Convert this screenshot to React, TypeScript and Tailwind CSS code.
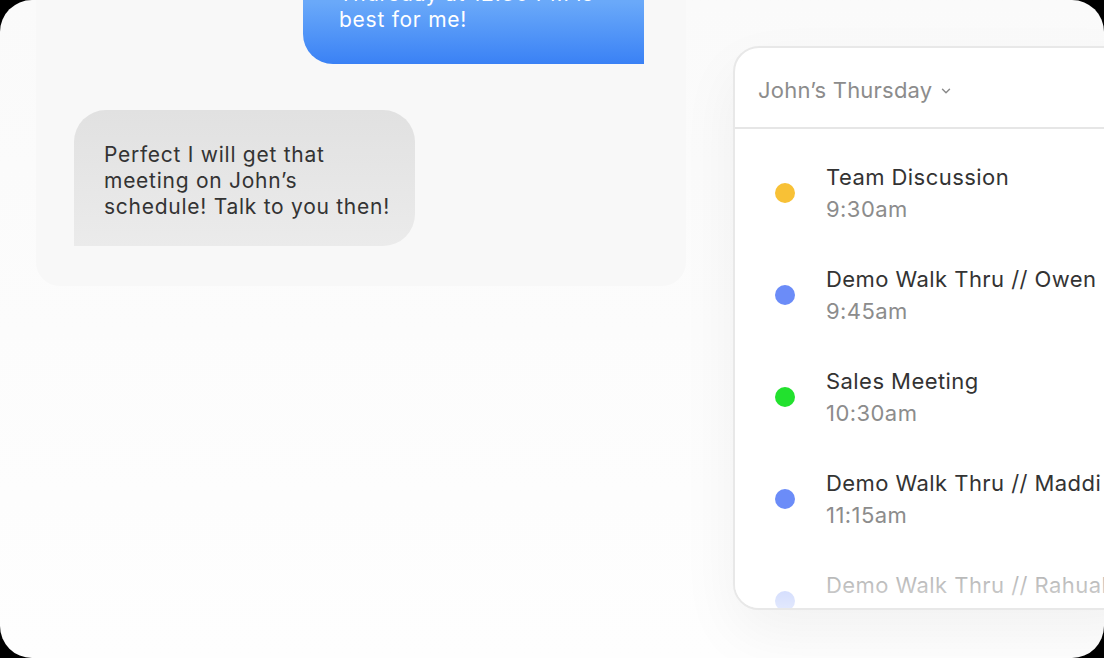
import { ChevronDown } from 'lucide-react'

const events = [
  { title: 'Team Discussion', time: '9:30am', color: 'bg-[#f8c136]' },
  { title: 'Demo Walk Thru // Owen', time: '9:45am', color: 'bg-[#6b8cf8]' },
  { title: 'Sales Meeting', time: '10:30am', color: 'bg-[#22e12e]' },
  { title: 'Demo Walk Thru // Maddi', time: '11:15am', color: 'bg-[#6b8cf8]' },
  { title: 'Demo Walk Thru // Rahual', time: '12:00pm', color: 'bg-[#6b8cf8]' },
]

export default function App() {
  return (
    <div className="w-[1104px] h-[658px] bg-black" style={{ fontFamily: 'Inter, "Noto Sans", sans-serif' }}>
      <div className="w-full h-full rounded-[32px] overflow-hidden bg-gradient-to-b from-[#fafafa] to-[#fefefe] flex items-start">
        {/* chat */}
        <div className="ml-[36px] mt-[-89px] w-[650px] shrink-0 rounded-b-[24px] bg-[#f8f8f8] pt-[40px] pb-[40px] flex flex-col">
          <div className="self-end mr-[42px] w-[341px] rounded-bl-[30px] bg-gradient-to-b from-[#6aa9f9] from-45% to-[#3a81f5] pl-[36px] pr-[10px] pt-[30px] pb-[31px] text-[21px] leading-[26px] tracking-[0.035em] text-white whitespace-nowrap">
            Thursday at 12:30 PM is
            <br />
            best for me!
          </div>
          <div className="mt-[46px] ml-[38px] w-[341px] rounded-t-[32px] rounded-br-[32px] bg-gradient-to-b from-[#e1e1e1] to-[#ebebeb] pl-[30px] pr-[10px] pt-[32px] pb-[26px] text-[21px] leading-[26px] tracking-[0.035em] text-[#333] whitespace-nowrap">
            Perfect I will get that
            <br />
            meeting on John’s
            <br />
            schedule! Talk to you then!
          </div>
        </div>

        {/* calendar */}
        <div className="relative ml-[47px] mt-[46px] w-[420px] h-[564px] shrink-0 rounded-[26px] border-2 border-[#e8e8e8] bg-white shadow-[0_24px_60px_rgba(0,0,0,0.05)] overflow-hidden">
          <div className="h-[81px] border-b-2 border-[#e6e6e6] pl-[23px] pt-[5px] flex items-center gap-[7px] text-[22px] tracking-[0.01em] text-[#8c8c8c]">
            <span>John’s Thursday</span>
            <ChevronDown size={14} strokeWidth={2.5} className="mt-[2px]" />
          </div>
          <div className="pt-[32px] pl-[40px] flex flex-col gap-[38px]">
            {events.map((e) => (
              <div key={e.title} className="flex items-center gap-[32px]">
                <div className={`w-[20px] h-[20px] rounded-full ${e.color}`} />
                <div className="-ml-[1px] flex flex-col text-[22px] leading-[32px] tracking-[0.02em] whitespace-nowrap">
                  <span className="text-[#333]">{e.title}</span>
                  <span className="text-[#8c8c8c]">{e.time}</span>
                </div>
              </div>
            ))}
          </div>
          <div className="absolute left-0 right-0 bottom-0 h-[64px] bg-gradient-to-b from-white/50 to-white/80" />
        </div>
      </div>
    </div>
  )
}
